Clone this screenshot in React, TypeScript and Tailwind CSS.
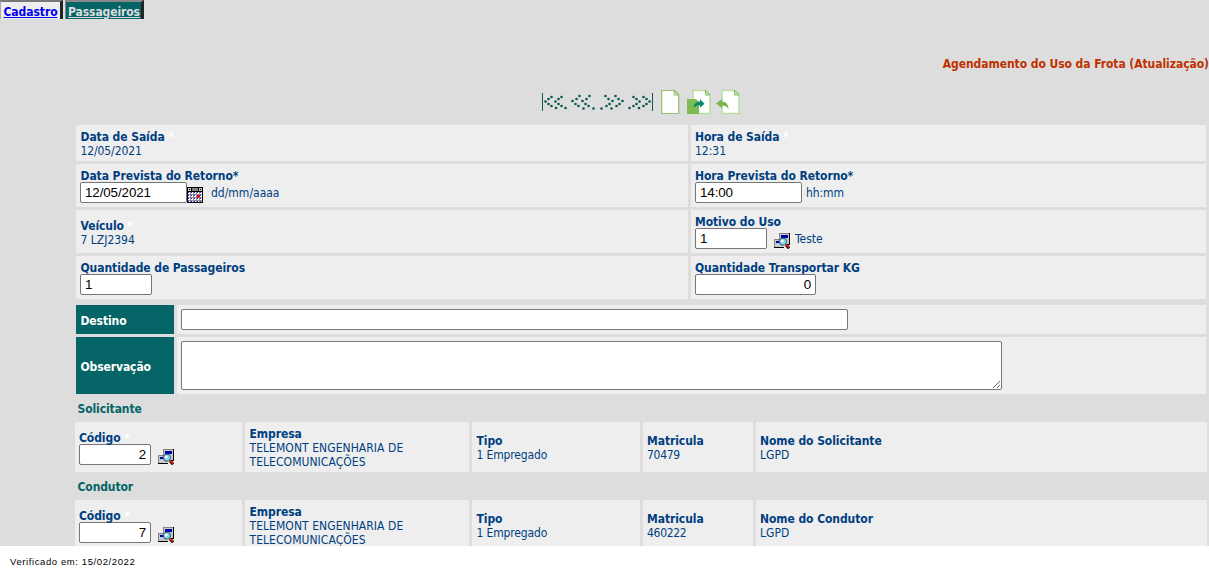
import React from "react";

const Star = () => <span className="text-white"> *</span>;

const Label = ({ children, className = "" }: { children: React.ReactNode; className?: string }) => (
  <div className={"font-bold leading-[14px] h-[14px] tracking-[-0.07px] " + className}>{children}</div>
);
const Value = ({ children, className = "" }: { children: React.ReactNode; className?: string }) => (
  <div className={"leading-[14px] h-[14px] " + className}>{children}</div>
);

const Field = ({ value, className = "" }: { value: string; className?: string }) => (
  <input
    defaultValue={value}
    className={
      "h-[21px] shrink-0 rounded-[2px] border border-[#767676] bg-white px-1 font-['Liberation_Sans',Arial,sans-serif] text-[13.333px] tracking-[-0.08px] text-black outline-none " +
      className
    }
  />
);

const SearchIcon = () => (
  <svg width="16" height="16" viewBox="0 0 16 16" shapeRendering="crispEdges" className="shrink-0">
    <rect x="5" y="0" width="11" height="11" fill="#c8c8c8" />
    <path d="M5 0h10v1H6v5H5z" fill="#848484" />
    <path d="M15 0h1v12h-3v-1h2z" fill="#000" />
    <path d="M7 2h7v3H7z" fill="#0000b0" />
    <rect x="0" y="6" width="9" height="8" fill="#c8c8c8" />
    <path d="M0 6h6v1H1v7H0z" fill="#848484" />
    <path d="M0 14h10v1H0z" fill="#000" />
    <path d="M2 8h4v2H2z" fill="#0000b0" />
    <g shapeRendering="auto">
      <path d="M12 12l3.200 3.200" stroke="#000" strokeWidth="3" />
      <path d="M11.800 11.400l3.200 3.200" stroke="#f21800" strokeWidth="1.900" />
      <circle cx="9" cy="8.700" r="3.600" fill="#7ed4f4" stroke="#305868" strokeWidth="1" />
      <circle cx="8.200" cy="7.900" r="1.500" fill="#fff" />
    </g>
  </svg>
);

const CalendarIcon = () => (
  <svg width="16" height="16" viewBox="0 0 16 16" shapeRendering="crispEdges" className="shrink-0">
    <rect width="16" height="16" fill="#000" />
    <rect x="5" y="1" width="6" height="3" fill="#808080" />
    <path d="M1 1h3v3H1zM12 1h3v3h-3z" fill="#c8c8c8" />
    <path d="M2 2h1v1H2zM13 2h1v1h-1z" fill="#000" />
    <rect x="1" y="5" width="14" height="10" fill="#8c8c98" />
    {[0, 1, 2, 3].map((r) =>
      [0, 1, 2, 3, 4].map((c) => (
        <g key={r + "-" + c}>
          <rect x={1 + c * 3} y={5 + r * 3} width="2" height={r === 3 ? 1 : 2} fill="#fff" />
          <rect x={1 + c * 3} y={5 + r * 3} width="1" height="1" fill="#2020d0" />
        </g>
      )),
    )}
    <path d="M11 8h2v2h-1v1h-2V9h1z" fill="#f00" />
  </svg>
);

const chevronDots = [
  [3, 12], [6, 9.5], [9, 7.5], [6, 14.5], [9, 16.5], [13.5, 18.5],
  [13, 12], [16, 9.5], [19, 7.5], [16, 14.5], [19, 16.5], [23, 18.5],
];
const wideDots = [
  [2, 11.5], [6, 9.5], [9, 6.5], [5, 14.5], [8, 16.5], [13, 19],
  [12, 11.5], [16, 9.5], [19, 6.5], [15, 14.5], [18, 16.5], [23, 19],
];
const Chevrons = ({ flip = false, bar = false }: { flip?: boolean; bar?: boolean }) => (
  <svg width="28" height="24" viewBox="0 0 28 24" className="shrink-0">
    <g transform={flip ? "translate(27 0) scale(-1 1)" : undefined}>
      {bar && <path d="M.5 4v18" stroke="#0c5a55" strokeWidth="1" />}
      {(bar ? chevronDots : wideDots).map(([x, y]) => (
        <circle key={x + "," + y} cx={x + 0.5} cy={y + 0.5} r="1.3" fill="#07584e" />
      ))}
    </g>
  </svg>
);

const Page = () => (
  <>
    <path d="M6 1.5h13l4 4v19H6z" fill="#fff" stroke="#b9dda4" strokeWidth="1.5" />
    <path d="M18.5 1.5v4.500h4.500z" fill="#d8edcc" stroke="#7fba5a" strokeWidth="1" />
  </>
);

const NewIcon = () => (
  <svg width="19" height="26" viewBox="0 0 19 26" className="shrink-0">
    <path d="M.7 1.500h13l4 4v19h-17z" fill="#fff" stroke="#8fc470" strokeWidth="1.200" />
    <path d="M13.200 1.500V6h4.500z" fill="#d8edcc" stroke="#7fba5a" strokeWidth="1" />
  </svg>
);
const SaveIcon = () => (
  <svg width="24" height="26" viewBox="0 0 24 26" className="shrink-0">
    <Page />
    <path d="M0 10h9l3 3v12H0z" fill="#7fbb53" />
    <path d="M6.500 18.500c.5-4 3-6 6.500-6V10l4.500 4.800-4.500 4v-2.500c-3 0-4 .7-6.500 2.200z" fill="#07896a" />
  </svg>
);
const BackIcon = () => (
  <svg width="25" height="26" viewBox="0 0 25 26" className="shrink-0">
    <Page />
    <path d="M0 14.500l6-4.500v2.500c4 0 6.500 3 6.500 7.500-1.500-2.500-3.500-3.500-6.500-3.500V19z" fill="#78b650" />
  </svg>
);

const cell = "bg-[#eee] ";

const Person = ({ code, registry, role }: { code: string; registry: string; role: string }) => (
  <div className="grid h-[50px] grid-cols-[167px_224px_168px_110px_451px] gap-[3px]">
    <div className={cell + "pl-1 pt-2"}>
      <Label className="translate-y-px">Código<Star /></Label>
      <div className="flex">
        <Field value={code} className="w-[72px] text-right" />
        <div className="ml-[7px] mt-[5px]"><SearchIcon /></div>
      </div>
    </div>
    <div className={cell + "pl-[4.5px] pt-[5px]"}>
      <Label>Empresa</Label>
      <Value className="tracking-[0.06px]">TELEMONT ENGENHARIA DE</Value>
      <Value className="tracking-[0.06px]">TELECOMUNICAÇÕES</Value>
    </div>
    <div className={cell + "pl-[4.500px] pt-3"}>
      <Label>Tipo</Label>
      <Value className="tracking-[-0.15px]">1 Empregado</Value>
    </div>
    <div className={cell + "pl-1 pt-3"}>
      <Label>Matricula</Label>
      <Value className="tracking-[-0.3px]">{registry}</Value>
    </div>
    <div className={cell + "pl-1 pt-3"}>
      <Label>Nome do {role}</Label>
      <Value>LGPD</Value>
    </div>
  </div>
);

export default function App() {
  return (
    <div className="flex h-[576px] w-[1209px] flex-col overflow-hidden bg-white font-['DejaVu_Sans_Condensed','DejaVu_Sans',sans-serif] text-[12px] text-[#003e80]">
      <div className="h-[546px] overflow-hidden bg-[#ddd]">
        <div className="flex h-[19px] gap-[2px]">
          <a className="flex h-[19px] w-[63px] justify-center border-r-[3px] border-t-2 border-l border-t-[#777] border-l-[#aaa] border-r-[#222] bg-[#eee] pt-[3px] font-bold leading-[14px] tracking-[-0.07px] text-[#00e] underline">Cadastro</a>
          <a className="flex h-[19px] w-[79px] justify-center border-r-[3px] border-t-2 border-l border-t-[#888] border-l-[#888] border-r-[#222] bg-[#056466] pl-px pt-[3px] font-bold leading-[14px] tracking-[-0.1px] text-[#ddd] underline">Passageiros</a>
        </div>
        <div className="mt-[37px] h-4 whitespace-nowrap text-right font-bold leading-4 tracking-[-0.06px] text-[#bf3000]">Agendamento do Uso da Frota (Atualização)</div>
        <div className="mt-[17px] flex h-[36px] pl-[542px]">
          <Chevrons bar />
          <Chevrons />
          <Chevrons flip />
          <Chevrons flip bar />
          <div className="ml-[7px]"><NewIcon /></div>
          <div className="ml-[7px]"><SaveIcon /></div>
          <div className="ml-[5px]"><BackIcon /></div>
        </div>
        <div className="ml-[76px] grid w-[1130px] grid-cols-[612px_515px] grid-rows-[36px_43px_43px_43px] gap-[3px]">
          <div className={cell + "pl-[4.500px] pt-[5px]"}><Label>Data de Saída<Star /></Label><Value className="tracking-[-0.1px]">12/05/2021</Value></div>
          <div className={cell + "pl-1 pt-[5px]"}><Label>Hora de Saída<Star /></Label><Value>12:31</Value></div>
          <div className={cell + "pl-1 pt-[5px]"}>
            <Label className="pl-[0.500px]">Data Prevista do Retorno*</Label>
            <div className="flex h-[22px] -translate-y-px">
              <Field value="12/05/2021" className="w-[107px]" />
              <div className="mt-[5px]"><CalendarIcon /></div>
              <span className="ml-2 mt-1 leading-[14px]">dd/mm/aaaa</span>
            </div>
          </div>
          <div className={cell + "pl-1 pt-[5px]"}>
            <Label>Hora Prevista do Retorno*</Label>
            <div className="flex h-[22px] -translate-y-px">
              <Field value="14:00" className="w-[107px]" />
              <span className="ml-1 mt-1 leading-[14px] tracking-[-0.1px]">hh:mm</span>
            </div>
          </div>
          <div className={cell + "pl-[4.500px] pt-[9px]"}><Label>Veículo<Star /></Label><Value>7 LZJ2394</Value></div>
          <div className={cell + "pl-1 pt-[5px]"}>
            <Label>Motivo do Uso</Label>
            <div className="flex h-[22px] -translate-y-px">
              <Field value="1" className="w-[72px]" />
              <div className="ml-[7px] mt-[5px]"><SearchIcon /></div>
              <span className="ml-[5px] mt-1 leading-[14px]">Teste</span>
            </div>
          </div>
          <div className={cell + "pl-1 pt-[5px]"}>
            <Label className="pl-[0.500px] tracking-[-0.1px]">Quantidade de Passageiros</Label>
            <div className="flex h-[22px] -translate-y-px"><Field value="1" className="w-[72px]" /></div>
          </div>
          <div className={cell + "pl-1 pt-[5px]"}>
            <Label>Quantidade Transportar KG</Label>
            <div className="flex h-[22px] -translate-y-px"><Field value="0" className="w-[121px] text-right" /></div>
          </div>
        </div>
        <div className="ml-[76px] mt-[6px] grid w-[1130px] grid-cols-[98px_1029px] grid-rows-[29px_57px] gap-[3px]">
          <div className="flex items-center bg-[#056466] pl-[4.500px] pt-[2px] font-bold tracking-[-0.1px] text-white">Destino</div>
          <div className={cell + "flex pl-1 pt-1"}><Field value="" className="w-[667px]" /></div>
          <div className="flex items-center bg-[#056466] pl-[4.500px] pt-[2px] font-bold tracking-[-0.1px] text-white">Observação</div>
          <div className={cell + "flex pl-1 pt-1"}>
            <textarea className="h-[49px] w-[821px] resize rounded-[2px] border border-[#767676] bg-white outline-none" />
          </div>
        </div>
        <div className="ml-[75px] w-[1132px]">
          <div className="h-[28px] pl-[2.500px] pt-[7px] font-bold leading-4 tracking-[-0.1px] text-[#056466]">Solicitante</div>
          <Person code="2" registry="70479" role="Solicitante" />
          <div className="h-[28px] pl-[2.500px] pt-[7px] font-bold leading-4 tracking-[-0.1px] text-[#056466]">Condutor</div>
          <Person code="7" registry="460222" role="Condutor" />
        </div>
      </div>
      <div className="pl-[10px] pt-[10px] font-['Liberation_Sans',Arial,sans-serif] text-[9.500px] leading-3 tracking-[0.6px] text-black">Verificado em: 15/02/2022</div>
    </div>
  );
}
